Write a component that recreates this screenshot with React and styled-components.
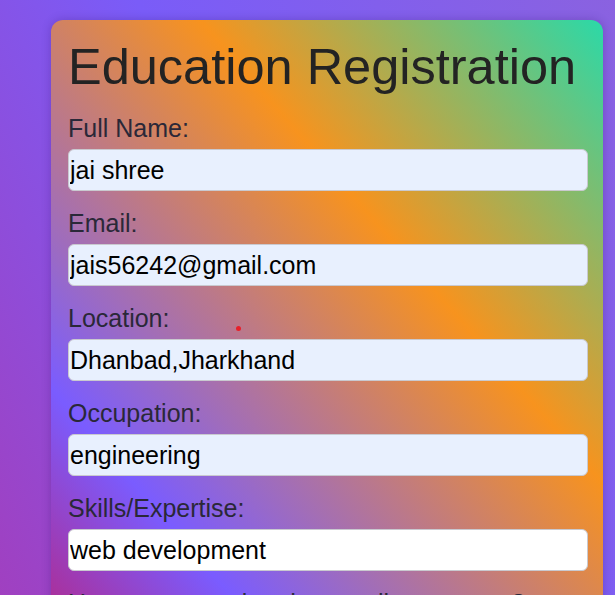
import React from 'react'
import styled, { createGlobalStyle } from 'styled-components'

const GlobalStyle = createGlobalStyle`
  html, body {
    margin: 0;
    height: 100%;
    overflow: hidden;
  }
  body {
    font-family: 'Liberation Sans', Arial, sans-serif;
    background: linear-gradient(60deg, #a040c0 0%, #7a5cf8 50%, #8a62e0 100%);
  }
`

const fields = [
  { label: 'Full Name:', value: 'jai shree', filled: true },
  { label: 'Email:', value: 'jais56242@gmail.com', filled: true },
  { label: 'Location:', value: 'Dhanbad,Jharkhand', filled: true },
  { label: 'Occupation:', value: 'engineering', filled: true },
  { label: 'Skills/Expertise:', value: 'web development', filled: false },
  { label: 'Have you completed any online courses?', value: '', filled: false },
]

const App = () => {
  return (
    <>
      <GlobalStyle />
      <Page>
        <Card>
          <Title>Education Registration</Title>
          {fields.map((f) => (
            <Field key={f.label}>
              <Label>{f.label}</Label>
              <Input type="text" defaultValue={f.value} $filled={f.filled} />
            </Field>
          ))}
          <Dot />
        </Card>
      </Page>
    </>
  )
}

const Page = styled.div`
  padding: 20px 12px 0 51px;
`

const Card = styled.form`
  position: relative;
  width: 552px;
  box-sizing: border-box;
  padding: 17px 16px 30px 17px;
  border-radius: 12px;
  box-shadow: 0 0 10px rgba(40, 10, 90, 0.25);
  background:
    linear-gradient(49deg, #b5258a 0px, #b02a8e 100px, #7a5cff 257px, #f7931e 611px, #2bd9a8 915px)
    top left / 552px 760px no-repeat,
    #7a5cff;
`

const Title = styled.h1`
  margin: 0 0 18px;
  font-size: 50.5px;
  font-weight: 400;
  line-height: normal;
  color: #232323;
`

const Field = styled.div`
  display: flex;
  flex-direction: column;
  margin-bottom: 18px;
`

const Label = styled.label`
  font-size: 25px;
  line-height: normal;
  color: #2a2838;
  margin-bottom: 6px;
`

const Input = styled.input`
  box-sizing: border-box;
  width: 520px;
  height: 42px;
  padding: 0 2px 0 1px;
  border: 1px solid #c9c9cf;
  border-radius: 6px;
  font-family: 'Liberation Sans', Arial, sans-serif;
  font-size: 25px;
  color: #000;
  background: ${(p) => (p.$filled ? '#e8f0fe' : '#ffffff')};
  outline: none;
`

const Dot = styled.span`
  position: absolute;
  left: 185px;
  top: 306px;
  width: 5px;
  height: 5px;
  border-radius: 50%;
  background: #e8202a;
`

export default App
